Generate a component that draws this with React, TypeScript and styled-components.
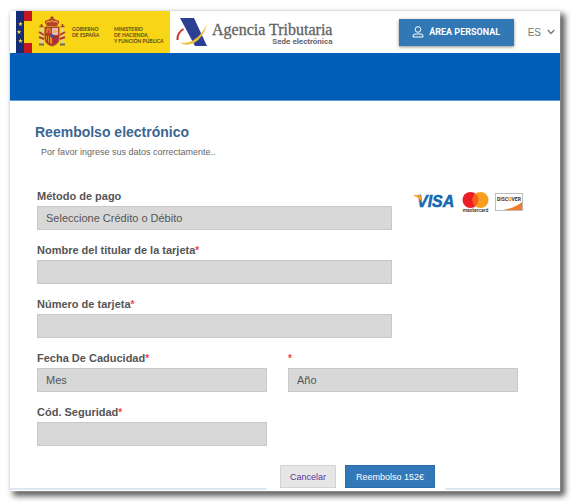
import React from "react";
import styled, { createGlobalStyle } from "styled-components";

const GlobalStyle = createGlobalStyle`
  *, *::before, *::after { box-sizing: border-box; }
  body {
    margin: 0;
    background: #ffffff;
    font-family: "Liberation Sans", Arial, sans-serif;
    color: #555555;
  }
`;

const Page = styled.div`
  padding: 11px 11px 11px 10px;
`;

const Card = styled.div`
  background: #ffffff;
  box-shadow: 0 0 2px #cccccc, 4px 4px 6px 1px rgba(0, 0, 0, 0.65);
`;

const Header = styled.header`
  display: flex;
  align-items: center;
  height: 42px;
  padding: 0 5px 0 6px;
`;

const Government = styled.div`
  display: flex;
  align-items: center;
  height: 42px;
  width: 154px;
  flex: none;
  background: #f8d616;
  color: #55481a;
  font-family: Lato, "Liberation Sans", sans-serif;
  font-size: 5px;
  font-weight: 700;
  line-height: 6px;
`;

const FlagArt = styled.svg`
  width: 54px;
  height: 42px;
  flex: none;
`;

const Department = styled.span<{ $width: number }>`
  width: ${({ $width }) => $width}px;
  padding-left: 2px;
  flex: none;
  align-self: flex-start;
  margin-top: 15px;
  white-space: nowrap;
`;

const Agency = styled.div`
  display: flex;
  align-items: center;
  flex: none;
  margin-left: 6px;
`;

const AgencyMark = styled.svg`
  width: 32px;
  height: 32px;
`;

const AgencyText = styled.div`
  display: flex;
  flex-direction: column;
  align-items: flex-end;
  margin: 6px 0 0 4px;
`;

const AgencyName = styled.span`
  font-family: "Liberation Serif", "Times New Roman", serif;
  font-size: 16px;
  line-height: 14px;
  color: #626262;
  -webkit-text-stroke: 0.3px #626262;
`;

const AgencySub = styled.span`
  font-family: Roboto, "Liberation Sans", sans-serif;
  font-size: 8px;
  font-weight: 700;
  line-height: 10px;
  color: #66666c;
`;

const HeaderTools = styled.div`
  display: flex;
  align-items: center;
  gap: 14px;
  margin-left: auto;
`;

const PersonalArea = styled.button`
  display: flex;
  align-items: center;
  justify-content: center;
  gap: 5px;
  width: 115px;
  height: 27px;
  padding: 0;
  border: 0;
  background: #3278b5;
  color: #ffffff;
  font: 700 9px Roboto, "Liberation Sans", sans-serif;
  box-shadow: 0 1px 3px rgba(0, 0, 0, 0.45);
`;

const Language = styled.button`
  display: flex;
  align-items: center;
  gap: 6px;
  padding: 0;
  border: 0;
  background: none;
  color: #777777;
  font: 10px "Liberation Sans", Arial, sans-serif;
`;

const Banner = styled.div`
  height: 48px;
  background: #005eb8;
  border-bottom: 1px solid #5f9bd2;
`;

const Content = styled.main`
  padding: 22px 37px 7px 27px;
`;

const Title = styled.h1`
  margin: 0 0 0 -2px;
  font-size: 14px;
  line-height: 18px;
  color: #3b6693;
`;

const Intro = styled.p`
  margin: 5px 0 30px 4px;
  font-size: 9px;
  line-height: 12px;
  color: #666666;
`;

const Payment = styled.div`
  display: grid;
  grid-template-columns: 73% 1fr;
`;

const Brands = styled.div`
  display: flex;
  align-items: flex-start;
  justify-content: flex-end;
  gap: 6px;
  padding-top: 4px;
`;

const Expiry = styled.div`
  display: grid;
  grid-template-columns: 1fr 1fr;
  column-gap: 21px;
  margin-right: 5px;
`;

const Field = styled.label`
  display: block;
  margin-bottom: 12px;
`;

const FieldName = styled.span`
  display: block;
  height: 18px;
  font-size: 11px;
  font-weight: 700;
  line-height: 16px;
  white-space: nowrap;
`;

const Required = styled.span`
  color: #f04444;
  font-size: 10px;
`;

const Input = styled.input`
  display: block;
  width: 100%;
  height: 24px;
  padding: 0 8px;
  border: 1px solid #c8c8c8;
  border-radius: 0;
  background: #d8d8d8;
  font: 11px "Liberation Sans", Arial, sans-serif;
  color: #555555;
`;

const Select = styled.select`
  display: block;
  width: 100%;
  height: 24px;
  padding: 0 8px;
  border: 1px solid #c8c8c8;
  border-radius: 0;
  appearance: none;
  background: #d8d8d8;
  font: 11px "Liberation Sans", Arial, sans-serif;
  color: #555555;
`;

const Footer = styled.footer`
  display: flex;
  align-items: flex-start;
  height: 26px;
`;

const Rule = styled.div<{ $grow: number }>`
  flex: ${({ $grow }) => $grow} 1 0;
  align-self: flex-end;
  height: 2px;
  margin-bottom: 1px;
  background: #dbe8f4;
`;

const Actions = styled.div`
  display: flex;
  gap: 9px;
  padding: 0 10px 0 13px;
`;

const Action = styled.button<{ $primary?: boolean }>`
  width: ${({ $primary }) => ($primary ? 90 : 56)}px;
  height: 23px;
  padding: 0;
  border: 1px solid ${({ $primary }) => ($primary ? "#286da8" : "#d2d2d2")};
  background: ${({ $primary }) => ($primary ? "#3278b8" : "#e6e6e6")};
  color: ${({ $primary }) => ($primary ? "#ffffff" : "#5b35a0")};
  font: 9px "Liberation Sans", Arial, sans-serif;
  white-space: nowrap;
`;

const star = (cx: number, cy: number) =>
  Array.from({ length: 10 }, (_, i) => {
    const r = i % 2 ? 1 : 2.5;
    const a = (i * Math.PI) / 5 - Math.PI / 2;
    return `${cx + r * Math.cos(a)},${cy + r * Math.sin(a)}`;
  }).join(" ");

function SpanishArms() {
  return (
    <FlagArt viewBox="0 0 54 42" aria-hidden="true">
      <rect width="8" height="42" fill="#142c75" />
      <rect x="8" width="9" height="42" fill="#f8d616" />
      <rect x="8" width="8" height="10" fill="#c4171f" />
      <rect x="8" y="32" width="8" height="10" fill="#c4171f" />
      {[13, 21, 30].map((y) => (
        <polygon key={y} points={star(y === 21 ? 3 : 4.5, y)} fill="#ffe13a" />
      ))}
      <path d="M29 12q-1-3 3-3q2-2 4-2t4 2q4 0 3 3l-2 3H31Z" fill="#b5442a" />
      <path d="M30 12q2-3 4-1q2-3 4 0q2-2 4 1" fill="none" stroke="#f0b93a" strokeWidth="1" />
      <path d="M36 5v3M34.500 6.500h3" stroke="#9d3b25" strokeWidth="1" />
      <path d="M29 16h14v12q0 5-7 7q-7-2-7-7Z" fill="#bd3a2b" stroke="#94502b" />
      <path d="M36 17h6v7h-6Z" fill="#e8b9bd" />
      <path d="M30 25h6v8q-6-2-6-6Z" fill="#d9922c" />
      <path d="M31.500 25v7M33.500 25v8" stroke="#b5272a" />
      <path d="M37 25h5v3q0 3-5 5Z" fill="#a92c42" />
      <path d="M31 22v-4h3v4M38 22l1-3l2 2" stroke="#e5a53b" fill="none" />
      <ellipse cx="36" cy="25" rx="1.600" ry="2" fill="#37539b" />
      <path d="M25.500 17v15M46.500 17v15" stroke="#d8cdb0" strokeWidth="2.400" />
      <path d="M23.500 15.500h4M44.500 15.500h4M25.500 13v3M46.500 13v3" stroke="#a74a28" strokeWidth="1.600" />
      <path d="M23 21l5 3M23 26l5 2M49 21l-5 3M49 26l-5 2" stroke="#b8342d" strokeWidth="2" />
      <path d="M23 33.500h5M44 33.500h5" stroke="#6d6b66" strokeWidth="2" />
    </FlagArt>
  );
}

function AgencyLogo() {
  return (
    <AgencyMark viewBox="0 0 32 32" aria-hidden="true">
      <path d="M4 2H18L31 30H19Z" fill="#2b4095" />
      <path d="M7.500 13Q1 17 1.500 24" fill="none" stroke="#c73327" strokeWidth="2" />
      <path d="M4 26Q8 31 18 27Q28 21 31 8Q26 19 17 24.500Q9 28.500 4 26Z" fill="#edbd36" />
    </AgencyMark>
  );
}

function VisaLogo() {
  return (
    <svg width="42" height="20" viewBox="0 0 42 20" role="img" aria-label="Visa">
      <text x="3" y="15" fontFamily="Liberation Sans" fontSize="16" fontWeight="700" fontStyle="italic" fill="#1467b1" stroke="#1467b1" strokeWidth=".5">
        VISA
      </text>
      <path d="M0 3H5Q7 3 7 5L8 11Q5 5 0 4Z" fill="#f5a127" />
    </svg>
  );
}

function MastercardLogo() {
  return (
    <svg width="27" height="22" viewBox="0 0 27 22" role="img" aria-label="Mastercard">
      <circle cx="8.500" cy="8" r="8" fill="#eb1d25" />
      <circle cx="18.500" cy="8" r="8" fill="#f89d1f" />
      <path d="M13.500 1.800a8 8 0 0 1 0 12.400a8 8 0 0 1 0-12.400Z" fill="#fa5f17" />
      <text x="13.500" y="20" textAnchor="middle" fontFamily="Roboto" fontSize="5" fontWeight="500" fill="#29262a">
        mastercard
      </text>
    </svg>
  );
}

function DiscoverLogo() {
  return (
    <svg width="28" height="19" viewBox="0 0 28 19" role="img" aria-label="Discover">
      <rect x=".5" y="1.500" width="27" height="17" fill="#ffffff" stroke="#bdbdbd" />
      <path d="M8 18Q20 16 27 10V18Z" fill="#f47a2b" />
      <text x="14" y="9" textAnchor="middle" fontFamily="Roboto" fontSize="5" fontWeight="700" fill="#3c3030">
        DISC<tspan fill="#f26a22">O</tspan>VER
      </text>
    </svg>
  );
}

function Picker({ name, label, option }: { name?: string; label?: string; option: string }) {
  return (
    <Field>
      <FieldName>
        {name}
        {name !== "Método de pago" && <Required>*</Required>}
      </FieldName>
      <Select aria-label={label}>
        <option>{option}</option>
      </Select>
    </Field>
  );
}

/* Display-only box: it takes no typing and keeps no value. */
function TextBox({ name }: { name: string }) {
  return (
    <Field>
      <FieldName>
        {name}
        <Required>*</Required>
      </FieldName>
      <Input type="text" readOnly autoComplete="off" />
    </Field>
  );
}

export default function App() {
  return (
    <Page>
      <GlobalStyle />
      <Card>
        <Header>
          <Government>
            <SpanishArms />
            <Department $width={42}>
              GOBIERNO
              <br />
              DE ESPAÑA
            </Department>
            <Department $width={58}>
              MINISTERIO
              <br />
              DE HACIENDA
              <br />Y FUNCIÓN PÚBLICA
            </Department>
          </Government>
          <Agency>
            <AgencyLogo />
            <AgencyText>
              <AgencyName>Agencia Tributaria</AgencyName>
              <AgencySub>Sede electrónica</AgencySub>
            </AgencyText>
          </Agency>
          <HeaderTools>
            <PersonalArea type="button">
              <svg width="12" height="12" viewBox="0 0 12 12" fill="none" stroke="currentColor" aria-hidden="true">
                <circle cx="6" cy="3.500" r="2.800" />
                <path d="M1 11V10Q1 8 3 8H9Q11 8 11 10V11Z" />
              </svg>
              ÁREA PERSONAL
            </PersonalArea>
            <Language type="button">
              ES
              <svg width="8" height="6" viewBox="0 0 8 6" fill="none" stroke="currentColor" strokeWidth="1.300" aria-hidden="true">
                <path d="M.7 1L4 4.500L7.300 1" />
              </svg>
            </Language>
          </HeaderTools>
        </Header>
        <Banner />
        <Content>
          <Title>Reembolso electrónico</Title>
          <Intro>Por favor ingrese sus datos correctamente..</Intro>
          <Payment>
            <div>
              <Picker name="Método de pago" option="Seleccione Crédito o Débito" />
              <TextBox name="Nombre del titular de la tarjeta" />
              <TextBox name="Número de tarjeta" />
            </div>
            <Brands>
              <VisaLogo />
              <MastercardLogo />
              <DiscoverLogo />
            </Brands>
          </Payment>
          <Expiry>
            <Picker name="Fecha De Caducidad" option="Mes" />
            <Picker label="Año" option="Año" />
            <TextBox name="Cód. Seguridad" />
          </Expiry>
        </Content>
        <Footer>
          <Rule $grow={257} />
          <Actions>
            <Action type="button">Cancelar</Action>
            <Action type="button" $primary>
              Reembolso 152€
            </Action>
          </Actions>
          <Rule $grow={115} />
        </Footer>
      </Card>
    </Page>
  );
}
